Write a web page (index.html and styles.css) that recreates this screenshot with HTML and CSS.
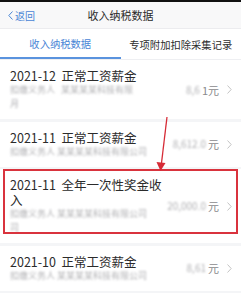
FILE: index.html
```html
<!DOCTYPE html>
<html lang="zh">
<head>
  <meta charset="UTF-8">
  <title>收入纳税数据</title>
  <meta name="viewport" content="width=device-width, initial-scale=1.0">
  <link rel="stylesheet" href="styles.css">
</head>
<body>
  <div class="statusbar"></div>
  <header class="nav">
    <a class="back">
      <svg width="5" height="9" viewBox="0 0 5 9"><polyline points="4.5,0.5 0.8,4.5 4.5,8.5" fill="none" stroke="#4a86d6" stroke-width="1"/></svg>
      返回
    </a>
    <h1>收入纳税数据</h1>
  </header>

  <nav class="tabs">
    <span class="tab active">收入纳税数据</span>
    <span class="tab">专项附加扣除采集记录</span>
  </nav>

  <ul class="list">
    <li class="item">
      <div class="info">
        <div class="title">2021-12&nbsp;&nbsp;正常工资薪金</div>
        <div class="blur">扣缴义务人&nbsp;&nbsp;&nbsp;某某某某科技有限</div>
        <div class="blur">月</div>
      </div>
      <div class="amount"><span class="blur">8,6</span>1元<svg class="chev" width="5" height="9" viewBox="0 0 5 9"><polyline points="0.5,0.5 4.2,4.5 0.5,8.5" fill="none" stroke="#c4c4c4" stroke-width="1"/></svg></div>
    </li>
    <li class="item">
      <div class="info">
        <div class="title">2021-11&nbsp;&nbsp;正常工资薪金</div>
        <div class="blur">扣缴义务人 某某某某科技有限公司</div>
      </div>
      <div class="amount"><span class="blur">8,612.0</span>元<svg class="chev" width="5" height="9" viewBox="0 0 5 9"><polyline points="0.5,0.5 4.2,4.5 0.5,8.5" fill="none" stroke="#c4c4c4" stroke-width="1"/></svg></div>
    </li>
    <li class="item marked">
      <div class="info">
        <div class="title narrow">2021-11&nbsp;&nbsp;全年一次性奖金收入</div>
        <div class="blur">扣缴义务人 某某某某科技有限公司</div>
        <div class="blur">司</div>
      </div>
      <div class="amount"><span class="blur">20,000.0</span>元<svg class="chev" width="5" height="9" viewBox="0 0 5 9"><polyline points="0.5,0.5 4.2,4.5 0.5,8.5" fill="none" stroke="#c4c4c4" stroke-width="1"/></svg></div>
      <div class="mark"></div>
    </li>
    <li class="item">
      <div class="info">
        <div class="title">2021-10&nbsp;&nbsp;正常工资薪金</div>
        <div class="blur">扣缴义务人 某某某某科技有限公司</div>
      </div>
      <div class="amount"><span class="blur">8,61</span>元<svg class="chev" width="5" height="9" viewBox="0 0 5 9"><polyline points="0.5,0.5 4.2,4.5 0.5,8.5" fill="none" stroke="#c4c4c4" stroke-width="1"/></svg></div>
    </li>
    <li class="item"></li>
  </ul>

  <!-- annotation arrow -->
  <svg class="arrow" width="241" height="300" viewBox="0 0 241 300">
    <line x1="167" y1="117" x2="161.5" y2="163" stroke="#d62b36" stroke-width="1.3"/>
    <polygon points="156.5,162 165.5,163 160.5,171" fill="#d62b36"/>
  </svg>
</body>
</html>
```

FILE: styles.css
```css
body {
  margin: 0;
  width: 241px;
  height: 300px;
  overflow: hidden;
  position: relative;
  font-family: "Noto Sans CJK SC", "Noto Sans", sans-serif;
  background: #f4f5f7;
}
.statusbar {
  height: 2px;
  background: #111;
}
.nav {
  display: grid;
  grid-template-columns: 1fr auto 1fr;
  align-items: center;
  height: 26px;
  padding: 0 8px;
  background: #f8f8f9;
  border-bottom: 1px solid #ececef;
}
.back {
  display: flex;
  align-items: center;
  gap: 2px;
  font-size: 10px;
  color: #4a86d6;
}
.nav h1 {
  margin: 0;
  font-size: 11px;
  font-weight: normal;
  color: #2a2a2a;
}
.tabs {
  display: grid;
  grid-template-columns: 1fr 1fr;
  height: 30px;
  background: #fff;
  border-bottom: 1px solid #eeeff2;
}
.tab {
  display: flex;
  align-items: center;
  justify-content: center;
  font-size: 10.3px;
  color: #2c2c2c;
}
.tab.active {
  color: #4a86d6;
  border-bottom: 2px solid #5a93de;
}
.list {
  list-style: none;
  margin: 0;
  padding: 0;
  display: flex;
  flex-direction: column;
  gap: 2.5px;
}
.item {
  position: relative;
  display: flex;
  align-items: center;
  padding: 8px 9px 8px 10px;
  background: #fff;
}
.info {
  flex: 1;
  min-width: 0;
}
.title {
  font-size: 12.5px;
  line-height: 15px;
  color: #2b2b2b;
}
.title.narrow {
  max-width: 152px;
}
.blur {
  font-size: 9px;
  line-height: 14px;
  color: #b0b0b3;
  filter: blur(1.2px);
  white-space: nowrap;
}
.amount {
  display: flex;
  align-items: center;
  font-size: 11px;
  color: #8a8a8d;
}
.amount .blur {
  font-size: 10px;
  margin-right: 2px;
}
.chev {
  margin-left: 8px;
}
.mark {
  position: absolute;
  left: 3px;
  right: 3px;
  top: 0;
  bottom: 9px;
  border: 2px solid #d9333d;
}
.arrow {
  position: absolute;
  left: 0;
  top: 0;
  pointer-events: none;
}
```
